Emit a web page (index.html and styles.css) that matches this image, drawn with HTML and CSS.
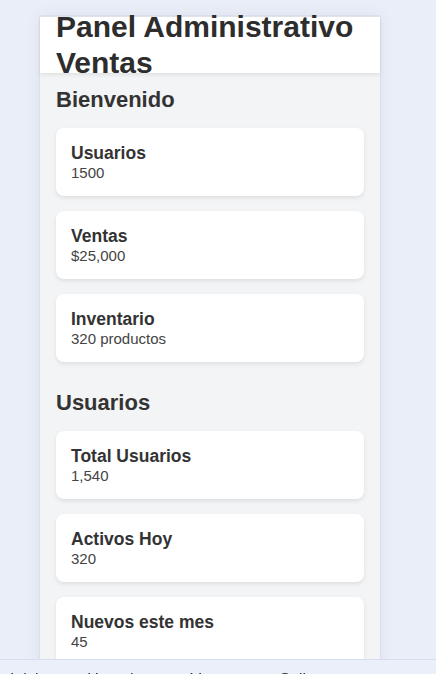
FILE: index.html
```html
<!DOCTYPE html>
<html lang="es">
<head>
<meta charset="utf-8">
<title>Panel Administrativo Ventas</title>
<link rel="stylesheet" href="styles.css">
</head>
<body>
<div class="app">
  <header class="topbar">
    <h1 class="title">Panel Administrativo Ventas</h1>
  </header>
  <main class="content">
    <section class="section">
      <h2 class="section-title">Bienvenido</h2>
      <div class="card"><h3 class="card-title">Usuarios</h3><p class="card-value">1500</p></div>
      <div class="card"><h3 class="card-title">Ventas</h3><p class="card-value">$25,000</p></div>
      <div class="card"><h3 class="card-title">Inventario</h3><p class="card-value">320 productos</p></div>
    </section>
    <section class="section">
      <h2 class="section-title">Usuarios</h2>
      <div class="card"><h3 class="card-title">Total Usuarios</h3><p class="card-value">1,540</p></div>
      <div class="card"><h3 class="card-title">Activos Hoy</h3><p class="card-value">320</p></div>
      <div class="card"><h3 class="card-title">Nuevos este mes</h3><p class="card-value">45</p></div>
    </section>
  </main>
</div>
<nav class="bottom-nav">
  <a class="nav-link" href="#">Inicio</a>
  <a class="nav-link" href="#">Usuarios</a>
  <a class="nav-link" href="#">Ventas</a>
  <a class="nav-link" href="#">Salir</a>
</nav>
</body>
</html>
```

FILE: styles.css
```css
* { box-sizing: border-box; }
html, body { margin: 0; padding: 0; }
body {
  background: #eaeef8;
  font-family: "Liberation Sans", Arial, sans-serif;
  color: #333;
  padding-top: 16px;
}
.app {
  width: 340px;
  margin-left: 40px;
  background: #f3f4f6;
  min-height: 800px;
  border-top: 1px solid #e1e4ea;
  box-shadow: 0 0 14px rgba(40, 60, 110, 0.08), 0 0 0 1px rgba(40, 60, 110, 0.04);
}
.topbar {
  height: 56px;
  display: flex;
  align-items: center;
  padding: 0 16px;
  background: #fff;
  box-shadow: 0 2px 4px rgba(0, 0, 0, 0.08);
  position: relative;
  z-index: 1;
}
.title {
  margin: 0;
  font-size: 30px;
  line-height: 36px;
  font-weight: 700;
  color: #2d2d2d;
}
.content {
  padding: 14px 16px 15px;
}
.section { margin-bottom: 28px; }
.section-title {
  margin: 0 0 15px;
  font-size: 22px;
  font-weight: 700;
  color: #333;
}
.card {
  background: #fff;
  border-radius: 8px;
  padding: 15px;
  margin-bottom: 15px;
  box-shadow: 0 2px 4px rgba(0, 0, 0, 0.09);
}
.card-title {
  margin: 0;
  font-size: 17.5px;
  font-weight: 700;
  color: #333;
}
.card-value {
  margin: 0;
  font-size: 15px;
  color: #444;
}
.bottom-nav {
  position: fixed;
  left: 0;
  right: 0;
  bottom: 0;
  top: 659px;
  background: #ebeff9;
  border-top: 1px solid #d6deef;
  display: flex;
  gap: 40px;
  padding: 10px 10px 0;
  z-index: 5;
}
.nav-link {
  color: #333;
  text-decoration: none;
  font-size: 16px;
  line-height: 20px;
}
```
